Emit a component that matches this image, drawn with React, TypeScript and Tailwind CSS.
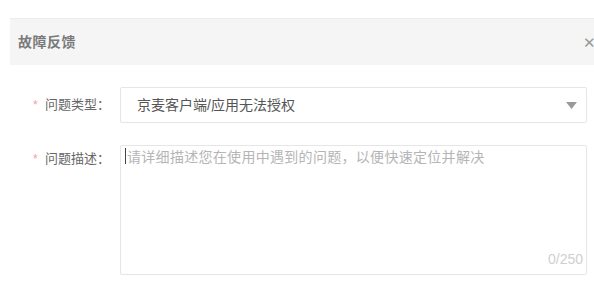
import { FC } from "react";

const FONT = "font-['Liberation_Sans','Noto_Sans_CJK_SC',sans-serif]";

const FieldLabel: FC<{ text: string }> = ({ text }) => (
  <div className="w-[87px] shrink-0 flex items-center text-[13px] leading-[20px] text-[#666]">
    <span className="w-[12px] text-[#f2a0a8] text-[12px]">*</span>
    <span>{text}</span>
  </div>
);

const App: FC = () => {
  return (
    <div className={`w-[594px] h-[294px] overflow-hidden bg-white pt-[18px] pl-[10px] ${FONT}`}>
      {/* Header */}
      <div className="h-[47px] bg-[#f5f5f5] border-t border-[#ececec] flex items-center justify-between pl-[8px]">
        <span className="text-[14px] font-semibold text-[#7a7a7a] tracking-[0.5px]">故障反馈</span>
        <span className="-mr-[2px] text-[15px] text-[#999] leading-none">✕</span>
      </div>

      {/* Form */}
      <div className="pl-[23px] pt-[22px] flex flex-col gap-[22px]">
        {/* Type */}
        <div className="flex items-center">
          <FieldLabel text="问题类型：" />
          <div className="w-[467px] h-[36px] border border-[#e6e6e6] rounded-[2px] flex items-center justify-between pl-[16px] pr-[9px] cursor-pointer">
            <span className="text-[14px] text-[#555]">京麦客户端/应用无法授权</span>
            <svg width="11" height="7" viewBox="0 0 11 7">
              <path d="M0 0 L11 0 L5.5 7 Z" fill="#9a9a9a" />
            </svg>
          </div>
        </div>

        {/* Description */}
        <div className="flex items-start">
          <div className="pt-[4px]">
            <FieldLabel text="问题描述：" />
          </div>
          <div className="relative w-[467px] h-[130px]">
            <textarea
              className="w-full h-full resize-none border border-[#e6e6e6] rounded-[2px] pl-[6px] pt-[1px] text-[14px] tracking-[0.3px] leading-[20px] text-[#555] placeholder:text-[#b5b5b5] outline-none"
              placeholder="请详细描述您在使用中遇到的问题，以便快速定位并解决"
            />
            <span className="absolute left-[5px] top-[3px] w-[1px] h-[16px] bg-[#444]" />
            <span className="absolute right-[4px] bottom-[5px] text-[14px] text-[#cfcfcf]">0/250</span>
          </div>
        </div>
      </div>
    </div>
  );
};

export default App;
